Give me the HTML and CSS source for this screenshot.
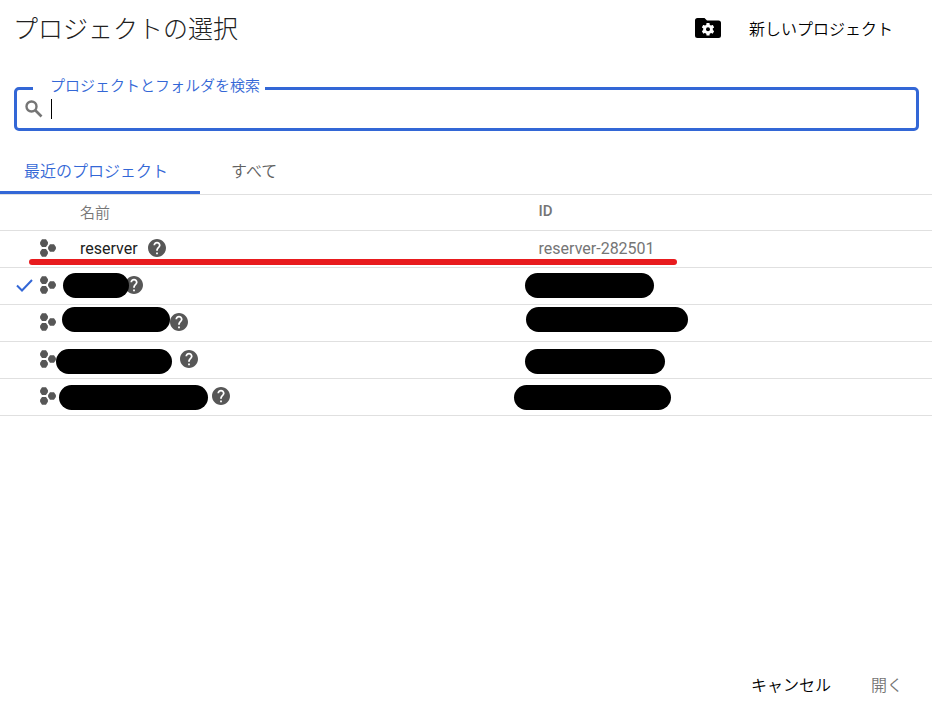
FILE: index.html
```
<!DOCTYPE html>
<html lang="ja">
<head>
    <meta charset="UTF-8">
    <meta name="viewport" content="width=device-width, initial-scale=1.0">
    <title>プロジェクトの選択</title>
    <link rel="stylesheet" href="styles.css">
</head>
<body>
    <svg class="defs" aria-hidden="true">
        <symbol id="project" viewBox="0 0 16 18">
            <path d="M2 0.300h4l2 3-.1 2L6 8H2L.1 5.300V3.300zM2 10h4l1.900 2.800v2L6 17.700H2L.1 14.800v-2zM10 5.200h4l1.900 2.800v2L14 12.800h-4L8.100 10V8z"/>
        </symbol>
        <symbol id="help" viewBox="2 2 20 20">
            <path d="M12 2C6.48 2 2 6.48 2 12s4.48 10 10 10 10-4.48 10-10S17.52 2 12 2zm1 17h-2v-2h2v2zm2.07-7.75l-.9.92C13.45 12.9 13 13.5 13 15h-2v-.5c0-1.1.45-2.1 1.17-2.83l1.24-1.26c.37-.36.59-.86.59-1.41 0-1.1-.9-2-2-2s-2 .9-2 2H8c0-2.21 1.79-4 4-4s4 1.79 4 4c0 .88-.36 1.68-.93 2.25z"/>
        </symbol>
    </svg>

    <header class="header">
        <h1>プロジェクトの選択</h1>
        <button class="new-project" type="button">
            <svg class="folder" viewBox="0 0 26 20">
                <path fill-rule="evenodd" d="M2.500 0H9.500L12 2.500H23.500A2.500 2.500 0 0 1 26 5V17.500A2.500 2.500 0 0 1 23.500 20H2.500A2.500 2.500 0 0 1 0 17.500V2.500A2.500 2.500 0 0 1 2.500 0z"/>
                <g fill="#fff">
                    <circle cx="13" cy="11.300" r="4.800"/>
                    <rect x="11.400" y="5" width="3.200" height="12.600" rx="0.600"/>
                    <rect x="11.400" y="5" width="3.200" height="12.600" rx="0.600" transform="rotate(60 13 11.300)"/>
                    <rect x="11.400" y="5" width="3.200" height="12.600" rx="0.600" transform="rotate(120 13 11.300)"/>
                </g>
                <circle cx="13" cy="11.300" r="2"/>
            </svg>
            新しいプロジェクト
        </button>
    </header>

    <fieldset class="search">
        <legend><label for="search">プロジェクトとフォルダを検索</label></legend>
        <div class="search-row">
            <svg class="search-icon" viewBox="0 0 18 18">
                <circle cx="6.500" cy="6.500" r="5" fill="none" stroke="#757575" stroke-width="2.400"/>
                <path d="M10.500 10.500l6 6" stroke="#757575" stroke-width="2.600"/>
            </svg>
            <span class="caret"></span>
            <input type="text" id="search">
        </div>
    </fieldset>

    <nav class="tabs">
        <button class="tab active" type="button">最近のプロジェクト</button>
        <button class="tab" type="button">すべて</button>
    </nav>

    <table class="projects">
        <thead>
            <tr>
                <th class="name-col">名前</th>
                <th class="id-col">ID</th>
            </tr>
        </thead>
        <tbody>
            <tr>
                <td>
                    <div class="project">
                        <span class="check"></span>
                        <svg class="project-icon"><use href="#project"/></svg>
                        <span class="name">reserver</span>
                        <svg class="help"><use href="#help"/></svg>
                    </div>
                    <span class="underline"></span>
                </td>
                <td>reserver-282501</td>
            </tr>
            <tr>
                <td>
                    <div class="project">
                        <svg class="check" viewBox="0 0 17 13"><path d="M1 6.500l5 5L16 1" fill="none" stroke="#3367d6" stroke-width="2"/></svg>
                        <svg class="project-icon"><use href="#project"/></svg>
                        <span class="name" style="width: 35px"></span>
                        <svg class="help"><use href="#help"/></svg>
                    </div>
                    <span class="mask" style="left: 63px; top: 5px; width: 66px"></span>
                </td>
                <td><span class="mask" style="left: 12px; top: 5px; width: 129px"></span></td>
            </tr>
            <tr>
                <td>
                    <div class="project">
                        <span class="check"></span>
                        <svg class="project-icon"><use href="#project"/></svg>
                        <span class="name" style="width: 80px"></span>
                        <svg class="help"><use href="#help"/></svg>
                    </div>
                    <span class="mask" style="left: 62px; top: 2px; width: 108px"></span>
                </td>
                <td><span class="mask" style="left: 13px; top: 2px; width: 162px"></span></td>
            </tr>
            <tr>
                <td>
                    <div class="project">
                        <span class="check"></span>
                        <svg class="project-icon"><use href="#project"/></svg>
                        <span class="name" style="width: 90px"></span>
                        <svg class="help"><use href="#help"/></svg>
                    </div>
                    <span class="mask" style="left: 56px; top: 7px; width: 116px"></span>
                </td>
                <td><span class="mask" style="left: 12px; top: 7px; width: 140px"></span></td>
            </tr>
            <tr>
                <td>
                    <div class="project">
                        <span class="check"></span>
                        <svg class="project-icon"><use href="#project"/></svg>
                        <span class="name" style="width: 122px"></span>
                        <svg class="help"><use href="#help"/></svg>
                    </div>
                    <span class="mask" style="left: 59px; top: 6px; width: 149px"></span>
                </td>
                <td><span class="mask" style="left: 1px; top: 6px; width: 157px"></span></td>
            </tr>
        </tbody>
    </table>

    <footer class="actions">
        <button type="button">キャンセル</button>
        <button type="button" disabled>開く</button>
    </footer>
</body>
</html>
```
FILE: styles.css
```
* {
    box-sizing: border-box;
}
body {
    display: flex;
    flex-direction: column;
    min-height: 100vh;
    margin: 0;
    background: white;
    color: #212121;
    font-family: Roboto, "Noto Sans CJK JP", sans-serif;
    font-size: 16px;
    font-weight: 350;
}
button, input {
    padding: 0;
    border: none;
    background: none;
    font: inherit;
    color: black;
}
.defs {
    position: absolute;
    width: 0;
    height: 0;
}
.header {
    display: flex;
    align-items: center;
    justify-content: space-between;
    height: 56px;
    padding: 0 39px 0 13px;
}
h1 {
    margin: 0;
    padding-bottom: 2px;
    font-size: 25px;
    font-weight: 300;
}
.new-project {
    display: flex;
    align-items: center;
    gap: 28px;
}
.folder {
    width: 26px;
    height: 20px;
}
.search {
    height: 56px;
    margin: 19px 13px 0 14px;
    padding: 0 8px 0 16px;
    border: 3px solid #3367d6;
    border-radius: 5px;
}
.search legend {
    padding: 0 5px 4px 17px;
    color: #3367d6;
    font-size: 15px;
    line-height: 22px;
}
.search-row {
    display: flex;
    align-items: center;
    margin: -4px 0 0 -8px;
}
.search-icon {
    width: 18px;
    height: 18px;
    margin-right: 8px;
}
.caret {
    width: 1px;
    height: 20px;
    background: black;
}
.search input {
    flex: 1;
    height: 24px;
    outline: none;
}
.tabs {
    display: flex;
    height: 45px;
    margin-top: 19px;
    border-bottom: 1px solid #e0e0e0;
}
.tab {
    padding: 0 31px 2px;
    border-bottom: 3px solid transparent;
    color: #616161;
}
.tab.active {
    width: 200px;
    padding: 0 24px 2px;
    border-color: #3367d6;
    color: #3367d6;
    text-align: left;
}
.projects {
    width: 100%;
    table-layout: fixed;
    border-spacing: 0;
}
th, td {
    position: relative;
    height: 37px;
    padding: 0 0 2px 26px;
    border-bottom: 1px solid #e0e0e0;
    color: #757575;
    font-weight: 400;
    text-align: left;
}
th {
    height: 36px;
    padding-bottom: 3px;
    font-size: 15px;
    font-weight: 500;
}
.name-col {
    width: 55%;
    padding-left: 80px;
    font-weight: 350;
}
td:first-child {
    padding-left: 16px;
}
.project {
    display: flex;
    align-items: center;
}
.check {
    width: 17px;
    height: 13px;
    margin-right: 7px;
}
.project-icon {
    width: 16px;
    height: 18px;
    margin-right: 24px;
    fill: #575757;
}
.name {
    margin-right: 10px;
    color: #212121;
}
.help {
    width: 18px;
    height: 18px;
    fill: #575757;
}
.mask {
    position: absolute;
    height: 25px;
    border-radius: 13px;
    background: black;
}
.underline {
    position: absolute;
    z-index: 1;
    left: 29px;
    bottom: 2px;
    width: 648px;
    height: 6px;
    border-radius: 3px;
    background: #e81b1e;
}
.actions {
    display: flex;
    gap: 40px;
    margin-top: auto;
    padding: 0 29px 17px 0;
    justify-content: flex-end;
}
.actions button:disabled {
    color: #757575;
}
```
